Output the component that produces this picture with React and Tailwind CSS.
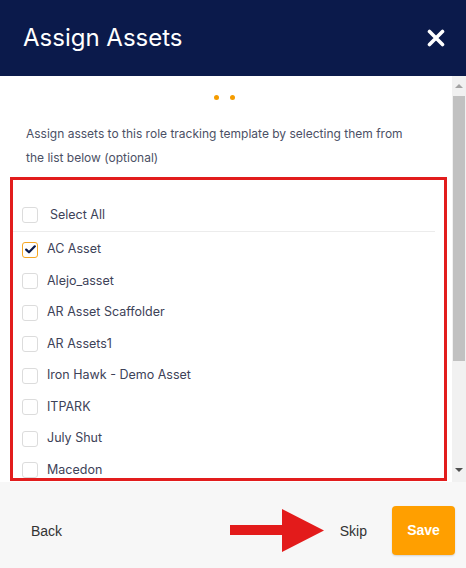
import { useState } from 'react';

const assets = [
    { name: 'AC Asset', checked: true },
    { name: 'Alejo_asset' },
    { name: 'AR Asset Scaffolder' },
    { name: 'AR Assets1' },
    { name: 'Iron Hawk - Demo Asset' },
    { name: 'ITPARK' },
    { name: 'July Shut' },
    { name: 'Macedon' },
];

function Box({ checked }) {
    return (
        <span
            className={
                checked
                    ? 'w-[16px] h-[16px] shrink-0 rounded-[3px] border-[1.5px] border-[#f6a623] flex items-center justify-center bg-white'
                    : 'w-[16px] h-[16px] shrink-0 rounded-[3px] border-[1.5px] border-[#dcdcdc] bg-white'
            }
        >
            {checked && (
                <svg width="11" height="9" viewBox="0 0 11 9">
                    <path d="M1.2 4.6 L4 7.3 L9.8 1.3" fill="none" stroke="#0b1a4b" strokeWidth="2.2" strokeLinecap="round" strokeLinejoin="round" />
                </svg>
            )}
        </span>
    );
}

export default function App() {
    const [list, setList] = useState(assets);

    const toggle = (i) => {
        setList(list.map((a, idx) => (idx === i ? { ...a, checked: !a.checked } : a)));
    };

    return (
        <div className="relative w-[466px] h-[568px] flex flex-col bg-white overflow-hidden font-['Inter',sans-serif]">
            {/* header */}
            <div className="h-[76px] shrink-0 bg-[#0b1a4b] flex items-center justify-between pl-[23px] pr-[21px]">
                <h1 className="text-white text-[24px] font-normal">Assign Assets</h1>
                <svg width="18" height="18" viewBox="0 0 18 18">
                    <path d="M2.5 2.5 L15.5 15.5 M15.5 2.5 L2.5 15.5" stroke="white" strokeWidth="3.6" strokeLinecap="round" />
                </svg>
            </div>

            {/* body */}
            <div className="flex-1 flex min-h-0">
                <div className="flex-1 flex flex-col min-w-0">
                    <div className="flex justify-center gap-[11px] pt-[19px] pr-[4px]">
                        <span className="w-[5px] h-[5px] rounded-full bg-[#f59c00]" />
                        <span className="w-[5px] h-[5px] rounded-full bg-[#f59c00]" />
                    </div>
                    <p className="pl-[26px] pr-[40px] pt-[22px] text-[12px] leading-[24px] text-[#4b5065]">
                        Assign assets to this role tracking template by selecting them from the list below (optional)
                    </p>
                    <div className="ml-[10px] mr-[5px] mt-[7px] mb-[1px] flex-1 min-h-0 border-[3px] border-[#e21d1d] overflow-hidden">
                        <div className="flex items-center gap-[12px] pl-[9px] pt-[26px] pb-[6px] mr-[9px] border-b border-[#ececec]">
                            <Box />
                            <span className="text-[12.5px] text-[#3d4258]">Select All</span>
                        </div>
                        <div className="pt-[2px]">
                            {list.map((a, i) => (
                                <div
                                    key={a.name}
                                    onClick={() => toggle(i)}
                                    className="h-[31.5px] flex items-center gap-[9px] pl-[9px] cursor-pointer"
                                >
                                    <Box checked={a.checked} />
                                    <span className="text-[12.5px] text-[#3d4258]">{a.name}</span>
                                </div>
                            ))}
                        </div>
                    </div>
                </div>

                {/* scrollbar */}
                <div className="w-[14px] shrink-0 bg-[#f1f1f1] flex flex-col items-center">
                    <div className="h-[20px] flex items-center justify-center">
                        <span className="w-0 h-0 border-l-[4px] border-r-[4px] border-b-[4px] border-l-transparent border-r-transparent border-b-[#a3a3a3]" />
                    </div>
                    <div className="w-[12px] h-[265px] bg-[#c1c1c1]" />
                    <div className="flex-1" />
                    <div className="h-[24px] flex items-center justify-center">
                        <span className="w-0 h-0 border-l-[4px] border-r-[4px] border-t-[4px] border-l-transparent border-r-transparent border-t-[#505050]" />
                    </div>
                </div>
            </div>

            {/* footer */}
            <div className="h-[86px] shrink-0 bg-[#f7f7f7] flex items-center pl-[31px] pr-[11px] pt-[10px] font-['Liberation_Sans',sans-serif]">
                <button className="text-[14px] text-[#333] mt-[2px]">Back</button>
                <div className="flex-1" />
                <button className="text-[14px] text-[#333] mr-[25px] mt-[2px]">Skip</button>
                <button className="w-[63px] h-[49px] rounded-[4px] bg-[#ff9f00] text-white text-[14px] font-bold shadow-[0_1px_2px_rgba(0,0,0,0.15)]">
                    Save
                </button>
            </div>

            {/* annotation arrow */}
            <svg className="absolute left-[230px] top-[509px]" width="95" height="43" viewBox="0 0 95 43">
                <path d="M0 16 L52 16 L52 0 L94 21.5 L52 43 L52 26 L0 26 Z" fill="#e31b1b" />
            </svg>
        </div>
    );
}
